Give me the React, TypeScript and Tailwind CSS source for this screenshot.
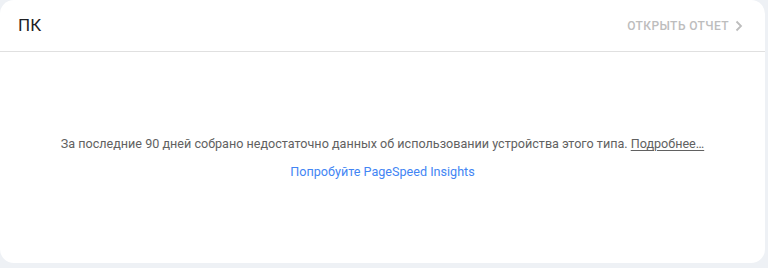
export default function App() {
  return (
    <div className="h-[268px] w-[768px] bg-[#eef1f5] font-['Roboto',sans-serif]">
      <div className="flex h-[263px] w-[765px] flex-col rounded-[14px] bg-white">
        <div className="flex h-[52px] items-center justify-between border-b border-[#e0e0e0] pl-[18px] pr-[22px]">
          <span className="text-[17px] text-[#202124]">ПК</span>
          <button className="flex items-center gap-[6px] text-[12px] font-medium tracking-[0.4px] text-[#bdbdbd]">
            ОТКРЫТЬ ОТЧЕТ
            <svg width="8" height="12" viewBox="0 0 8 12" fill="none">
              <path d="M1.5 1.5L6 6l-4.5 4.5" stroke="#bdbdbd" strokeWidth="1.8" />
            </svg>
          </button>
        </div>
        <div className="flex flex-1 flex-col items-center pt-[83px] text-[12.6px]">
          <p className="text-[#616161]">
            За последние 90 дней собрано недостаточно данных об использовании устройства этого типа.{" "}
            <a className="underline underline-offset-2">Подробнее…</a>
          </p>
          <a className="mt-[9px] text-[#4285f4]">Попробуйте PageSpeed Insights</a>
        </div>
      </div>
    </div>
  );
}
